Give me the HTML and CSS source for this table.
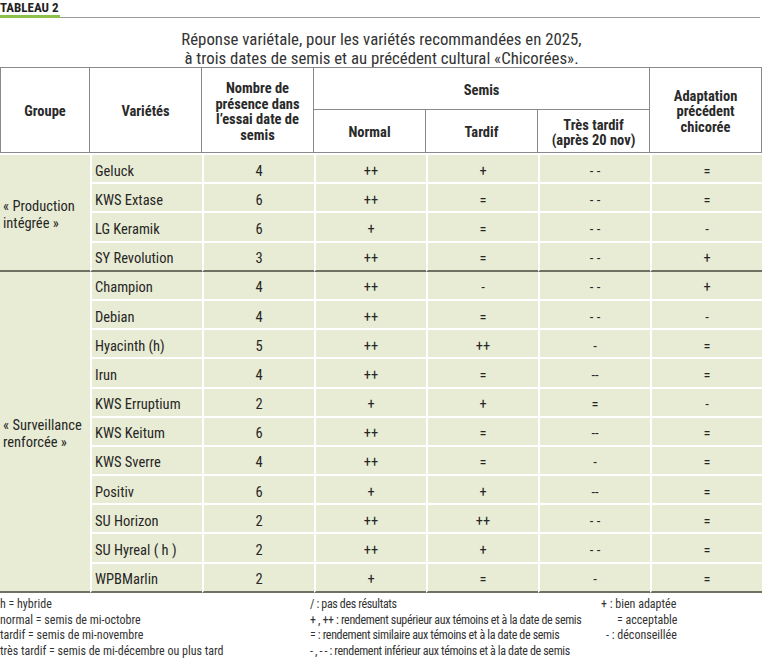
FILE: index.html
```html
<!DOCTYPE html>
<html lang="fr">
<head>
<meta charset="utf-8">
<link rel="stylesheet" href="styles.css">
</head>
<body>
<div class="page">
  <div class="label-row">
    <div class="label">TABLEAU 2</div>
    <div class="rule"></div>
  </div>
  <div class="title">Réponse variétale, pour les variétés recommandées en 2025,<br>à trois dates de semis et au précédent cultural «Chicorées».</div>
  <table class="tab">
    <colgroup>
      <col class="c-grp"><col class="c-var"><col class="c-num"><col class="c-s"><col class="c-s"><col class="c-s"><col class="c-s">
    </colgroup>
    <thead>
      <tr class="h1">
        <th rowspan="2" class="first">Groupe</th>
        <th rowspan="2">Variétés</th>
        <th rowspan="2">Nombre de<br>présence dans<br>l’essai date de<br>semis</th>
        <th colspan="3">Semis</th>
        <th rowspan="2">Adaptation<br>précédent<br>chicorée</th>
      </tr>
      <tr class="h2">
        <th>Normal</th>
        <th>Tardif</th>
        <th>Très tardif<br>(après 20 nov)</th>
      </tr>
    </thead>
    <tbody class="g1">
      <tr class="first"><td class="grp" rowspan="4">« Production<br>intégrée »</td><td class="var">Geluck</td><td>4</td><td>++</td><td>+</td><td>- -</td><td>=</td></tr>
      <tr><td class="var">KWS Extase</td><td>6</td><td>++</td><td>=</td><td>- -</td><td>=</td></tr>
      <tr><td class="var">LG Keramik</td><td>6</td><td>+</td><td>=</td><td>- -</td><td>-</td></tr>
      <tr class="last"><td class="var">SY Revolution</td><td>3</td><td>++</td><td>=</td><td>- -</td><td>+</td></tr>
    </tbody>
    <tbody class="g2">
      <tr><td class="grp" rowspan="11">« Surveillance<br>renforcée »</td><td class="var">Champion</td><td>4</td><td>++</td><td>-</td><td>- -</td><td>+</td></tr>
      <tr><td class="var">Debian</td><td>4</td><td>++</td><td>=</td><td>- -</td><td>-</td></tr>
      <tr><td class="var">Hyacinth (h)</td><td>5</td><td>++</td><td>++</td><td>-</td><td>=</td></tr>
      <tr><td class="var">Irun</td><td>4</td><td>++</td><td>=</td><td>--</td><td>=</td></tr>
      <tr><td class="var">KWS Erruptium</td><td>2</td><td>+</td><td>+</td><td>=</td><td>-</td></tr>
      <tr><td class="var">KWS Keitum</td><td>6</td><td>++</td><td>=</td><td>--</td><td>=</td></tr>
      <tr><td class="var">KWS Sverre</td><td>4</td><td>++</td><td>=</td><td>-</td><td>=</td></tr>
      <tr><td class="var">Positiv</td><td>6</td><td>+</td><td>+</td><td>--</td><td>=</td></tr>
      <tr><td class="var">SU Horizon</td><td>2</td><td>++</td><td>++</td><td>- -</td><td>=</td></tr>
      <tr><td class="var">SU Hyreal ( h )</td><td>2</td><td>++</td><td>+</td><td>- -</td><td>=</td></tr>
      <tr class="last"><td class="var">WPBMarlin</td><td>2</td><td>+</td><td>=</td><td>-</td><td>=</td></tr>
    </tbody>
  </table>
  <div class="legend">
    <div class="lcol l1">
      <div>h = hybride</div>
      <div>normal = semis de mi-octobre</div>
      <div>tardif = semis de mi-novembre</div>
      <div>très tardif = semis de mi-décembre ou plus tard</div>
    </div>
    <div class="lcol l2">
      <div>/ : pas des résultats</div>
      <div>+ , ++ : rendement supérieur aux témoins et à la date de semis</div>
      <div>= : rendement similaire aux témoins et à la date de semis</div>
      <div>- , - - : rendement inférieur aux témoins et à la date de semis</div>
    </div>
    <div class="lcol l3">
      <div>+ : bien adaptée</div>
      <div class="ind1">= acceptable</div>
      <div class="ind2">- : déconseillée</div>
    </div>
  </div>
</div>
</body>
</html>
```

FILE: styles.css
```css
html, body {
  margin: 0;
  padding: 0;
  background: #fff;
}
body {
  font-family: "Roboto Condensed", "Liberation Sans Narrow", "Liberation Sans", sans-serif;
  color: #262626;
}
.page {
  width: 763px;
}
.label-row {
  display: flex;
  align-items: flex-end;
  height: 18px;
}
.label {
  width: 60px;
  white-space: nowrap;
  font-weight: bold;
  font-size: 13px;
  line-height: 14px;
  border-bottom: 3px solid #8cc04a;
  color: #222;
}
.rule {
  flex: 1;
  margin-right: 3px;
  border-bottom: 1px solid #9a9a9a;
}
.title {
  text-align: center;
  font-size: 16.8px;
  line-height: 19px;
  color: #333;
  padding-top: 12px;
  height: 37px;
}
.tab {
  width: 761px;
  table-layout: fixed;
  border-collapse: separate;
  border-spacing: 0;
  font-size: 14.5px;
}
.c-grp { width: 90px; }
.c-var { width: 112px; }
.c-num { width: 112px; }
.c-s { width: 112px; }
thead th {
  border-right: 1px solid #8a8a8a;
  border-bottom: 1px solid #8a8a8a;
  font-weight: bold;
  font-size: 14.5px;
  line-height: 15.5px;
  color: #2a2a2a;
  text-align: center;
  vertical-align: middle;
  padding: 4px 2px 0;
}
.h1 th { border-top: 1px solid #8a8a8a; }
th.first { border-left: 1px solid #8a8a8a; }
.h1 { height: 43px; }
.h2 { height: 43px; }
tbody tr { height: 29.2px; }
tbody tr.first { height: 31.2px; }
tbody td {
  background: #e9ecd4;
  border-bottom: 2px solid #fff;
  border-left: 2px solid #fff;
  padding: 6px 0 0;
  text-align: center;
  vertical-align: middle;
  line-height: 16px;
}
tbody tr.first td { border-top: 2px solid #fff; }
td.grp {
  border-left: 0;
  text-align: left;
  padding-left: 3px;
  line-height: 17px;
}
td.var {
  text-align: left;
  padding-left: 3px;
}
tr.last td, td.grp {
  border-bottom: 2px solid #6e7263;
}
.legend {
  display: flex;
  font-size: 12px;
  line-height: 15.7px;
  color: #333;
  padding-top: 4px;
}
.l1 { width: 310px; }
.l2 { width: 291px; letter-spacing: -0.35px; }
.l3 { flex: 1; }
.ind1 { padding-left: 16px; }
.ind2 { padding-left: 5px; }
```
